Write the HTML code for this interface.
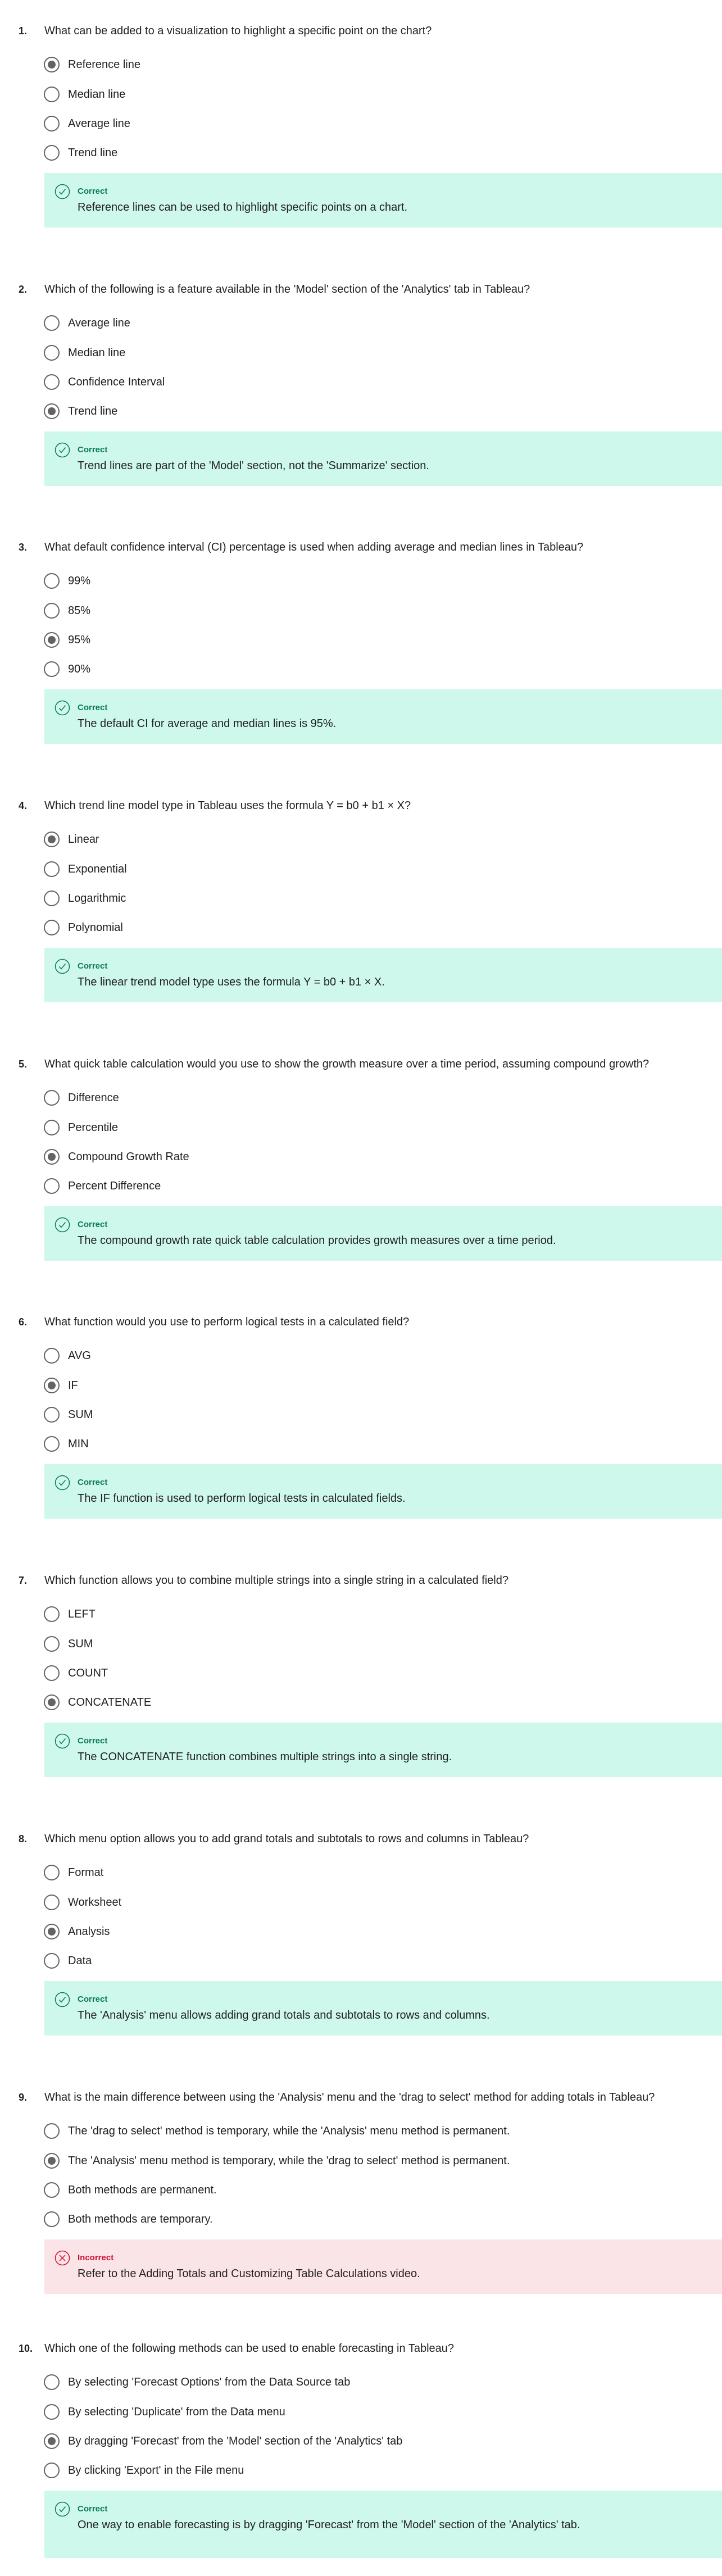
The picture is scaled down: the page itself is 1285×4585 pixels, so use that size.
<!DOCTYPE html>
<html><head><meta charset="utf-8">
<style>
body{margin:0;background:#fff;font-family:"Liberation Sans",sans-serif;color:#1f1f1f;width:1285px;height:4524px;overflow:hidden}
.q{position:relative;height:459.7px}
.qt{position:absolute;left:79px;top:43px;font-size:20px;line-height:24px;white-space:nowrap}
.qn{position:absolute;left:33px;top:43px;font-size:18px;line-height:24px;font-weight:bold}
.op{position:absolute;left:78px;height:28px;font-size:20px;line-height:28px;white-space:nowrap}
.op .r{position:absolute;left:0;top:0;width:24px;height:24px;border:2px solid #636363;border-radius:50%}
.op.s .r::after{content:"";position:absolute;left:5px;top:5px;width:14px;height:14px;border-radius:50%;background:#636363}
.op span{position:absolute;left:43px;top:0}
.fb{position:absolute;left:79px;right:0;top:308px;height:97px;background:#cff8ec}
.fb.bad{background:#fbe4e8}
.fb svg{position:absolute;left:18px;top:19px}
.fb .l{position:absolute;left:59px;top:24px;font-size:15px;font-weight:bold;color:#0b7a57;line-height:18px}
.fb.bad .l{color:#d1112f}
.fb .t{position:absolute;left:59px;top:49px;font-size:20px;line-height:24px;white-space:nowrap}
</style></head><body>

<div class="q"><div class="qn">1.</div><div class="qt">What can be added to a visualization to highlight a specific point on the chart?</div>
<div class="op s" style="top:101px"><div class="r"></div><span>Reference line</span></div>
<div class="op" style="top:154px"><div class="r"></div><span>Median line</span></div>
<div class="op" style="top:206px"><div class="r"></div><span>Average line</span></div>
<div class="op" style="top:258px"><div class="r"></div><span>Trend line</span></div>
<div class="fb"><svg width="28" height="28" viewBox="0 0 28 28"><circle cx="14" cy="14" r="12.5" fill="none" stroke="#0b7a57" stroke-width="1.5"/><path d="M8.5 14.5l3.5 4 7.5-9" fill="none" stroke="#0b7a57" stroke-width="1.5"/></svg><div class="l">Correct</div><div class="t">Reference lines can be used to highlight specific points on a chart.</div></div></div>

<div class="q"><div class="qn">2.</div><div class="qt">Which of the following is a feature available in the 'Model' section of the 'Analytics' tab in Tableau?</div>
<div class="op" style="top:101px"><div class="r"></div><span>Average line</span></div>
<div class="op" style="top:154px"><div class="r"></div><span>Median line</span></div>
<div class="op" style="top:206px"><div class="r"></div><span>Confidence Interval</span></div>
<div class="op s" style="top:258px"><div class="r"></div><span>Trend line</span></div>
<div class="fb"><svg width="28" height="28" viewBox="0 0 28 28"><circle cx="14" cy="14" r="12.5" fill="none" stroke="#0b7a57" stroke-width="1.5"/><path d="M8.5 14.5l3.5 4 7.5-9" fill="none" stroke="#0b7a57" stroke-width="1.5"/></svg><div class="l">Correct</div><div class="t">Trend lines are part of the 'Model' section, not the 'Summarize' section.</div></div></div>

<div class="q"><div class="qn">3.</div><div class="qt">What default confidence interval (CI) percentage is used when adding average and median lines in Tableau?</div>
<div class="op" style="top:101px"><div class="r"></div><span>99%</span></div>
<div class="op" style="top:154px"><div class="r"></div><span>85%</span></div>
<div class="op s" style="top:206px"><div class="r"></div><span>95%</span></div>
<div class="op" style="top:258px"><div class="r"></div><span>90%</span></div>
<div class="fb"><svg width="28" height="28" viewBox="0 0 28 28"><circle cx="14" cy="14" r="12.5" fill="none" stroke="#0b7a57" stroke-width="1.5"/><path d="M8.5 14.5l3.5 4 7.5-9" fill="none" stroke="#0b7a57" stroke-width="1.5"/></svg><div class="l">Correct</div><div class="t">The default CI for average and median lines is 95%.</div></div></div>

<div class="q"><div class="qn">4.</div><div class="qt">Which trend line model type in Tableau uses the formula Y = b0 + b1 × X?</div>
<div class="op s" style="top:101px"><div class="r"></div><span>Linear</span></div>
<div class="op" style="top:154px"><div class="r"></div><span>Exponential</span></div>
<div class="op" style="top:206px"><div class="r"></div><span>Logarithmic</span></div>
<div class="op" style="top:258px"><div class="r"></div><span>Polynomial</span></div>
<div class="fb"><svg width="28" height="28" viewBox="0 0 28 28"><circle cx="14" cy="14" r="12.5" fill="none" stroke="#0b7a57" stroke-width="1.5"/><path d="M8.5 14.5l3.5 4 7.5-9" fill="none" stroke="#0b7a57" stroke-width="1.5"/></svg><div class="l">Correct</div><div class="t">The linear trend model type uses the formula Y = b0 + b1 × X.</div></div></div>

<div class="q"><div class="qn">5.</div><div class="qt">What quick table calculation would you use to show the growth measure over a time period, assuming compound growth?</div>
<div class="op" style="top:101px"><div class="r"></div><span>Difference</span></div>
<div class="op" style="top:154px"><div class="r"></div><span>Percentile</span></div>
<div class="op s" style="top:206px"><div class="r"></div><span>Compound Growth Rate</span></div>
<div class="op" style="top:258px"><div class="r"></div><span>Percent Difference</span></div>
<div class="fb"><svg width="28" height="28" viewBox="0 0 28 28"><circle cx="14" cy="14" r="12.5" fill="none" stroke="#0b7a57" stroke-width="1.5"/><path d="M8.5 14.5l3.5 4 7.5-9" fill="none" stroke="#0b7a57" stroke-width="1.5"/></svg><div class="l">Correct</div><div class="t">The compound growth rate quick table calculation provides growth measures over a time period.</div></div></div>

<div class="q"><div class="qn">6.</div><div class="qt">What function would you use to perform logical tests in a calculated field?</div>
<div class="op" style="top:101px"><div class="r"></div><span>AVG</span></div>
<div class="op s" style="top:154px"><div class="r"></div><span>IF</span></div>
<div class="op" style="top:206px"><div class="r"></div><span>SUM</span></div>
<div class="op" style="top:258px"><div class="r"></div><span>MIN</span></div>
<div class="fb"><svg width="28" height="28" viewBox="0 0 28 28"><circle cx="14" cy="14" r="12.5" fill="none" stroke="#0b7a57" stroke-width="1.5"/><path d="M8.5 14.5l3.5 4 7.5-9" fill="none" stroke="#0b7a57" stroke-width="1.5"/></svg><div class="l">Correct</div><div class="t">The IF function is used to perform logical tests in calculated fields.</div></div></div>

<div class="q"><div class="qn">7.</div><div class="qt">Which function allows you to combine multiple strings into a single string in a calculated field?</div>
<div class="op" style="top:101px"><div class="r"></div><span>LEFT</span></div>
<div class="op" style="top:154px"><div class="r"></div><span>SUM</span></div>
<div class="op" style="top:206px"><div class="r"></div><span>COUNT</span></div>
<div class="op s" style="top:258px"><div class="r"></div><span>CONCATENATE</span></div>
<div class="fb"><svg width="28" height="28" viewBox="0 0 28 28"><circle cx="14" cy="14" r="12.5" fill="none" stroke="#0b7a57" stroke-width="1.5"/><path d="M8.5 14.5l3.5 4 7.5-9" fill="none" stroke="#0b7a57" stroke-width="1.5"/></svg><div class="l">Correct</div><div class="t">The CONCATENATE function combines multiple strings into a single string.</div></div></div>

<div class="q"><div class="qn">8.</div><div class="qt">Which menu option allows you to add grand totals and subtotals to rows and columns in Tableau?</div>
<div class="op" style="top:101px"><div class="r"></div><span>Format</span></div>
<div class="op" style="top:154px"><div class="r"></div><span>Worksheet</span></div>
<div class="op s" style="top:206px"><div class="r"></div><span>Analysis</span></div>
<div class="op" style="top:258px"><div class="r"></div><span>Data</span></div>
<div class="fb"><svg width="28" height="28" viewBox="0 0 28 28"><circle cx="14" cy="14" r="12.5" fill="none" stroke="#0b7a57" stroke-width="1.5"/><path d="M8.5 14.5l3.5 4 7.5-9" fill="none" stroke="#0b7a57" stroke-width="1.5"/></svg><div class="l">Correct</div><div class="t">The 'Analysis' menu allows adding grand totals and subtotals to rows and columns.</div></div></div>

<div class="q"><div class="qn">9.</div><div class="qt">What is the main difference between using the 'Analysis' menu and the 'drag to select' method for adding totals in Tableau?</div>
<div class="op" style="top:101px"><div class="r"></div><span>The 'drag to select' method is temporary, while the 'Analysis' menu method is permanent.</span></div>
<div class="op s" style="top:154px"><div class="r"></div><span>The 'Analysis' menu method is temporary, while the 'drag to select' method is permanent.</span></div>
<div class="op" style="top:206px"><div class="r"></div><span>Both methods are permanent.</span></div>
<div class="op" style="top:258px"><div class="r"></div><span>Both methods are temporary.</span></div>
<div class="fb bad"><svg width="28" height="28" viewBox="0 0 28 28"><circle cx="14" cy="14" r="12.5" fill="none" stroke="#d1112f" stroke-width="1.5"/><path d="M9 9l10 10M19 9L9 19" fill="none" stroke="#d1112f" stroke-width="1.5"/></svg><div class="l">Incorrect</div><div class="t">Refer to the Adding Totals and Customizing Table Calculations video.</div></div></div>

<div class="q" style="top:-12px"><div class="qn">10.</div><div class="qt">Which one of the following methods can be used to enable forecasting in Tableau?</div>
<div class="op" style="top:101px"><div class="r"></div><span>By selecting 'Forecast Options' from the Data Source tab</span></div>
<div class="op" style="top:154px"><div class="r"></div><span>By selecting 'Duplicate' from the Data menu</span></div>
<div class="op s" style="top:206px"><div class="r"></div><span>By dragging 'Forecast' from the 'Model' section of the 'Analytics' tab</span></div>
<div class="op" style="top:258px"><div class="r"></div><span>By clicking 'Export' in the File menu</span></div>
<div class="fb" style="height:120px"><svg width="28" height="28" viewBox="0 0 28 28"><circle cx="14" cy="14" r="12.5" fill="none" stroke="#0b7a57" stroke-width="1.5"/><path d="M8.5 14.5l3.5 4 7.5-9" fill="none" stroke="#0b7a57" stroke-width="1.5"/></svg><div class="l">Correct</div><div class="t">One way to enable forecasting is by dragging 'Forecast' from the 'Model' section of the 'Analytics' tab.</div></div></div>

</body></html>
